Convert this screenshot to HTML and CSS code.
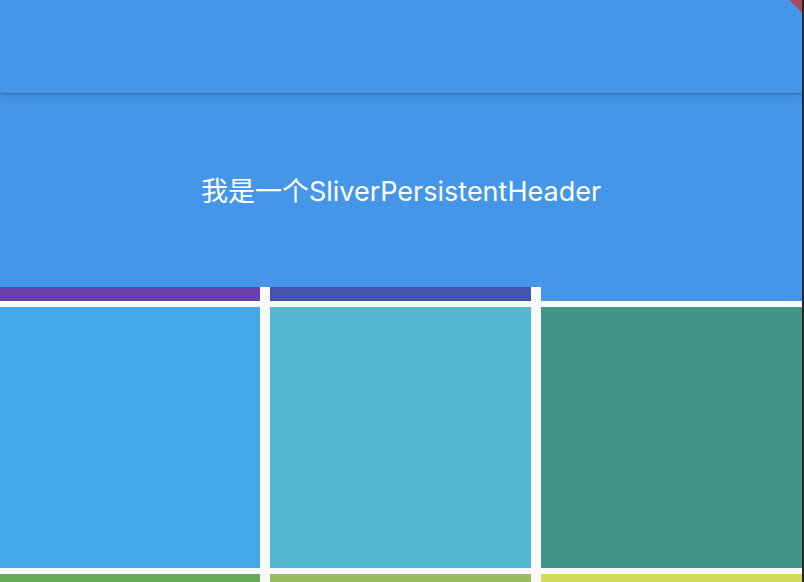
FILE: index.html
```html
<!DOCTYPE html>
<html>
<head>
<meta charset="utf-8">
<link rel="stylesheet" href="styles.css">
</head>
<body>
<div class="screen">
  <div class="content">
    <div class="appbar"></div>
    <div class="header"><span class="title">我是一个SliverPersistentHeader</span></div>
    <div class="grid">
      <div class="tile c-deeppurple"></div>
      <div class="tile c-indigo"></div>
      <div class="tile c-blue"></div>
      <div class="tile c-lightblue"></div>
      <div class="tile c-cyan"></div>
      <div class="tile c-teal"></div>
      <div class="tile c-green"></div>
      <div class="tile c-lightgreen"></div>
      <div class="tile c-lime"></div>
    </div>
    <div class="banner"></div>
  </div>
  <div class="edge"></div>
</div>
</body>
</html>
```
FILE: styles.css
```css
html, body {
  margin: 0;
  padding: 0;
  width: 804px;
  height: 582px;
  overflow: hidden;
  background: #fafafa;
}
.screen {
  display: flex;
  width: 804px;
  height: 582px;
}
.content {
  position: relative;
  width: 802px;
  height: 582px;
  overflow: hidden;
  background: #f9f9f9;
  display: flex;
  flex-direction: column;
}
.edge {
  width: 2px;
  height: 582px;
  background: #262626;
}
.appbar {
  flex: none;
  height: 93px;
  background: #4596e8;
  position: relative;
  z-index: 2;
  box-shadow: 0 1px 2px rgba(0,0,0,0.18), 0 3px 8px rgba(0,0,0,0.12);
}
.header {
  flex: none;
  height: 194px;
  background: #4596e8;
  display: flex;
  align-items: center;
  justify-content: center;
}
.title {
  color: #ffffff;
  font-family: Inter, "Noto Sans CJK SC", sans-serif;
  font-size: 27px;
  line-height: 1;
  position: relative;
  top: 1px;
}
.grid {
  flex: none;
  display: grid;
  grid-template-columns: 260px 261px 261px;
  grid-template-rows: 14px 261px 261px;
  column-gap: 10px;
  row-gap: 6px;
}
.c-deeppurple { background: #693fae; }
.c-indigo { background: #4454ae; }
.c-blue { background: #4596e8; }
.c-lightblue { background: #47a7ec; }
.c-cyan { background: #53b8d0; }
.c-teal { background: #429488; }
.c-green { background: #67ab5b; }
.c-lightgreen { background: #98bd5e; }
.c-lime { background: #d2db5b; }
.banner {
  position: absolute;
  top: -9px;
  right: -9px;
  width: 18px;
  height: 18px;
  background: #a64a5d;
  transform: rotate(45deg);
  z-index: 3;
}
```
